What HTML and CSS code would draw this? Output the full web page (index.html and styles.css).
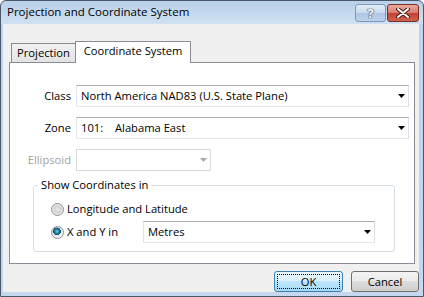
FILE: index.html
```html
<!DOCTYPE html>
<html lang="en">
<head>
  <meta charset="UTF-8">
  <title>Projection and Coordinate System</title>
  <link rel="stylesheet" href="styles.css">
</head>
<body>

  <div class="window">
    <div class="titlebar">
      <span class="title">Projection and Coordinate System</span>
      <div class="caption-buttons">
        <span class="cap-btn help">?</span>
        <span class="cap-btn close">
          <svg width="14" height="10" viewBox="0 0 14 10">
            <path d="M2 1L12 9M12 1L2 9" stroke="#4a1d18" stroke-width="4" stroke-linecap="round"/>
            <path d="M2 1L12 9M12 1L2 9" stroke="#fff" stroke-width="2" stroke-linecap="round"/>
          </svg>
        </span>
      </div>
    </div>

    <div class="client">
      <div class="tabs">
        <div class="tab">Projection</div>
        <div class="tab active">Coordinate System</div>
      </div>

      <div class="panel">
        <div class="fields">
          <span class="field-label">Class</span>
          <div class="combo">
            <span class="combo-text">North America NAD83 (U.S. State Plane)</span>
            <svg class="arrow" width="7" height="4" viewBox="0 0 7 4"><path d="M0 0H7L3.5 4Z"/></svg>
          </div>

          <span class="field-label">Zone</span>
          <div class="combo">
            <span class="combo-text"><span class="zone-code">101:</span>Alabama East</span>
            <svg class="arrow" width="7" height="4" viewBox="0 0 7 4"><path d="M0 0H7L3.5 4Z"/></svg>
          </div>

          <span class="field-label disabled">Ellipsoid</span>
          <div class="combo combo-disabled">
            <span class="combo-text"></span>
            <svg class="arrow" width="7" height="4" viewBox="0 0 7 4"><path d="M0 0H7L3.5 4Z"/></svg>
          </div>
        </div>

        <fieldset class="group">
          <legend>Show Coordinates in</legend>
          <div class="radio-row">
            <span class="radio"></span>
            <span class="radio-label">Longitude and Latitude</span>
          </div>
          <div class="radio-row">
            <span class="radio checked"></span>
            <span class="radio-label short">X and Y in</span>
            <div class="combo combo-units">
              <span class="combo-text">Metres</span>
              <svg class="arrow" width="7" height="4" viewBox="0 0 7 4"><path d="M0 0H7L3.5 4Z"/></svg>
            </div>
          </div>
        </fieldset>
      </div>

      <div class="buttons">
        <button class="btn default"><span class="focus">OK</span></button>
        <button class="btn">Cancel</button>
      </div>
    </div>
  </div>

</body>
</html>
```

FILE: styles.css
```css
body {
  margin: 0;
  font-family: 'Open Sans', sans-serif;
  font-size: 11.2px;
  line-height: 16px;
  color: #000;
}
.window {
  width: 424px;
  height: 297px;
  box-sizing: border-box;
  border: 1px solid #4b5869;
  border-radius: 6px 6px 0 0;
  padding: 0 4px 4px 2px;
  background: linear-gradient(to bottom, #b8d0ea 0, #d0e0f2 23px, #bcd4ee 23px, #c4d8ef 100%);
  display: flex;
  flex-direction: column;
}
.titlebar {
  height: 23px;
  box-sizing: border-box;
  padding: 3px 0 0 4px;
  display: flex;
  align-items: flex-start;
  justify-content: space-between;
  font-size: 11.5px;
}
.caption-buttons {
  display: flex;
  gap: 1px;
}
.cap-btn {
  height: 18px;
  box-sizing: border-box;
  border-radius: 3px;
  display: flex;
  align-items: center;
  justify-content: center;
}
.help {
  width: 31px;
  border: 1px solid #7e98ba;
  background: linear-gradient(to bottom, #e3ecf7 0, #c9d9ee 50%, #aec5e3 50%, #bcd1ec 100%);
  color: #fff;
  font-weight: bold;
  font-size: 13px;
  text-shadow: 0 0 1px #2b3f5e, 0 0 1px #2b3f5e, 0 0 1px #2b3f5e;
}
.close {
  width: 32px;
  border: 1px solid #7a2b22;
  background: linear-gradient(to bottom, #e9a99f 0, #d77c6e 50%, #c2402f 50%, #d0634f 100%);
}

.client {
  flex: 1;
  background: #f0f0f0;
  padding: 17px 0 0 6px;
  display: flex;
  flex-direction: column;
}
.tabs {
  height: 21px;
  display: flex;
  align-items: flex-end;
  padding-left: 2px;
}
.tab {
  height: 19px;
  width: 65px;
  box-sizing: border-box;
  border: 1px solid #898c95;
  border-bottom: none;
  background: linear-gradient(to bottom, #f2f2f2, #e3e3e3);
  text-align: center;
  line-height: 18px;
}
.tab.active {
  position: relative;
  z-index: 1;
  width: 116px;
  height: 22px;
  margin-left: -1px;
  margin-bottom: -1px;
  background: #fff;
  line-height: 17px;
}

.panel {
  height: 202px;
  box-sizing: border-box;
  margin-right: 4px;
  border: 1px solid #898c95;
  background: #fff;
  padding-top: 22px;
}
.fields {
  display: grid;
  grid-template-columns: 61px 333px;
  column-gap: 5px;
  row-gap: 10px;
  align-items: center;
}
.field-label {
  text-align: right;
}
.field-label.disabled {
  color: #a3a3a3;
}
.combo {
  height: 22px;
  box-sizing: border-box;
  border: 1px solid;
  border-color: #abadb3 #dbdfe6 #e3e9ef #e2e3ea;
  background: #fff;
  display: flex;
  align-items: center;
  padding: 0 3px 0 4px;
}
.combo-text {
  flex: 1;
  white-space: nowrap;
}
.zone-code {
  display: inline-block;
  width: 34px;
}
.arrow path {
  fill: #000;
}
.combo-disabled {
  width: 135px;
  border-color: #d9d9d9;
}
.combo-disabled .arrow path {
  fill: #a8a8a8;
}

.group {
  margin: 6px 0 0 23px;
  width: 362px;
  box-sizing: border-box;
  border: 1px solid #d5dfe5;
  border-radius: 3px;
  padding: 0 4px 8px 4px;
}
.group legend {
  padding: 0 3px;
}
.radio-row {
  display: flex;
  align-items: center;
  padding-left: 13px;
}
.radio-row:first-of-type {
  margin-top: 8px;
  margin-bottom: 4px;
}
.radio {
  width: 13px;
  height: 13px;
  box-sizing: border-box;
  border-radius: 50%;
  border: 1px solid #8e8f8f;
  background: radial-gradient(circle at 50% 50%, #e9e9e9 0, #d2d2d2 45%, #f4f4f4 75%);
  margin-right: 3px;
}
.radio.checked {
  background: radial-gradient(circle at 45% 40%, #7cd3ec 0, #1b7da0 25%, #0e4a66 42%, #e8e8e8 45%, #f6f6f6 75%);
}
.radio-label.short {
  width: 76px;
}
.combo-units {
  width: 232px;
}

.buttons {
  display: flex;
  justify-content: flex-end;
  gap: 8px;
  margin-top: 7px;
}
.btn {
  height: 21px;
  width: 68px;
  box-sizing: border-box;
  border: 1px solid #707070;
  border-radius: 3px;
  background: linear-gradient(to bottom, #f2f2f2 0, #ebebeb 50%, #dddddd 50%, #cfcfcf 100%);
  font-family: 'Open Sans', sans-serif;
  font-size: 11.2px;
  padding: 0;
}
.btn.default {
  width: 69px;
  border-color: #3c7fb1;
  background: linear-gradient(to bottom, #eaf6fd 0, #d9f0fc 50%, #bee6fd 50%, #a7d9f5 100%);
  padding: 2px;
}
.focus {
  display: block;
  height: 100%;
  box-sizing: border-box;
  border: 1px dotted #000;
  line-height: 13px;
}
```
